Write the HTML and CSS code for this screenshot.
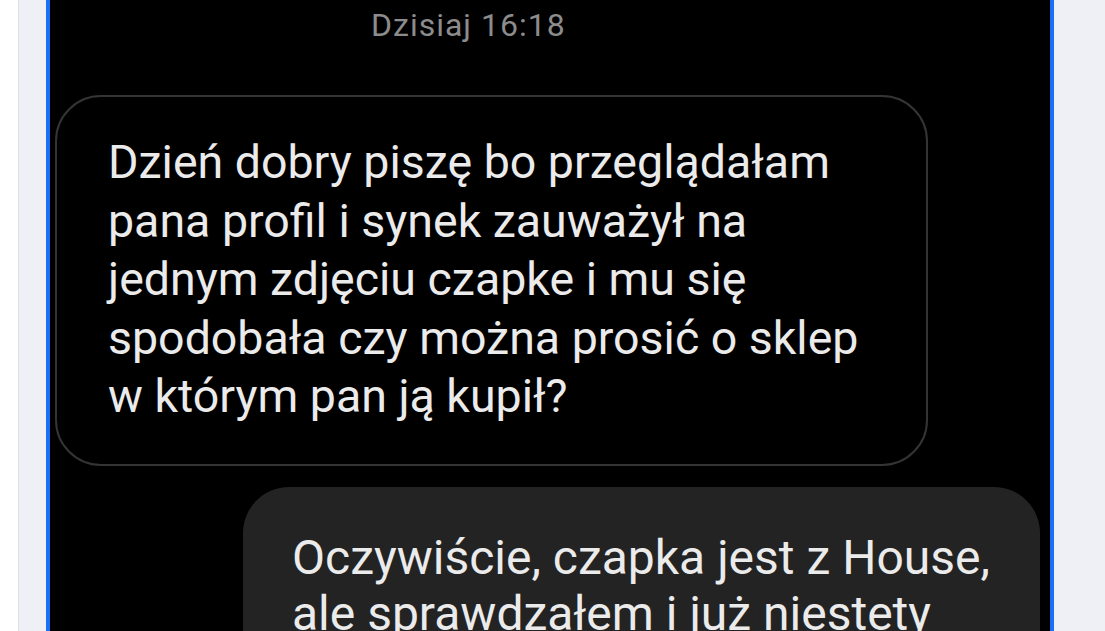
FILE: index.html
```html
<!DOCTYPE html>
<html lang="pl">
<head>
<meta charset="utf-8">
<title>Wiadomości</title>
<link rel="stylesheet" href="styles.css">
</head>
<body>
<div class="page">
  <div class="feed">
    <div class="post">
      <div class="chat">
        <div class="stamp">Dzisiaj 16:18</div>
        <div class="bubble incoming">Dzień dobry piszę bo przeglądałam<br>pana profil i synek zauważył na<br>jednym zdjęciu czapke i mu się<br>spodobała czy można prosić o sklep<br>w którym pan ją kupił?</div>
        <div class="bubble outgoing">Oczywiście, czapka jest z House,<br>ale sprawdzałem i już niestety<br>jej nie ma.</div>
      </div>
    </div>
  </div>
</div>
</body>
</html>
```
FILE: styles.css
```css
html, body {
  margin: 0;
  padding: 0;
  height: 100%;
  overflow: hidden;
  background: #ffffff;
}
.page {
  display: flex;
  height: 100%;
  padding-left: 18px;
}
.feed {
  flex: 1;
  display: flex;
  background: #eff0f5;
  border-left: 1px solid #dedfe4;
  padding-left: 27px;
}
.post {
  width: 1000px;
  height: 100%;
  background: #000;
  border-left: 4px solid #1a6ff4;
  border-right: 4px solid #1a6ff4;
  overflow: hidden;
}
.chat {
  display: flex;
  flex-direction: column;
  font-family: Roboto, "Noto Sans", sans-serif;
  color: #ebebeb;
}
.stamp {
  margin-left: 321px;
  padding-top: 7px;
  font-size: 32px;
  line-height: 36px;
  letter-spacing: 1px;
  color: #8c8c8c;
}
.bubble {
  box-sizing: border-box;
}
.incoming {
  margin-top: 52px;
  margin-left: 5px;
  width: 873px;
  height: 371px;
  border: 2px solid #343434;
  border-radius: 46px;
  padding: 36px 20px 0 51px;
  font-size: 46.5px;
  line-height: 58.5px;
}
.outgoing {
  margin-top: 21px;
  margin-left: 193px;
  width: 797px;
  background: #232323;
  border-radius: 46px;
  padding: 43px 20px 30px 49px;
  font-size: 48px;
  line-height: 56px;
}
```
